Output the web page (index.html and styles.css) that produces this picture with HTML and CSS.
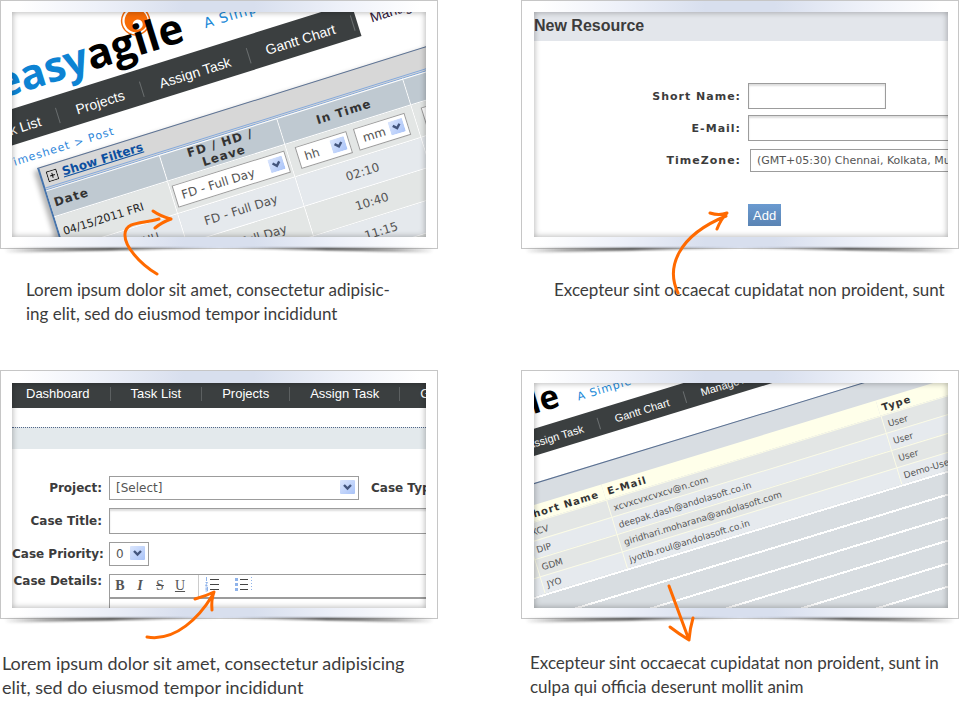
FILE: index.html
```
<!DOCTYPE html>
<html lang="en">
<head>
<meta charset="utf-8">
<title>easyagile tour</title>
<link rel="stylesheet" href="styles.css">
</head>
<body>
<svg class="defs" aria-hidden="true">
  <defs>
    <linearGradient id="curl" x1="0" x2="1" y1="0" y2="0">
      <stop offset="0" stop-color="#333" stop-opacity="0"/>
      <stop offset=".1" stop-color="#333" stop-opacity=".45"/>
      <stop offset=".25" stop-color="#222" stop-opacity=".95"/>
      <stop offset=".5" stop-color="#444" stop-opacity=".5"/>
      <stop offset=".75" stop-color="#222" stop-opacity=".95"/>
      <stop offset=".9" stop-color="#333" stop-opacity=".45"/>
      <stop offset="1" stop-color="#333" stop-opacity="0"/>
    </linearGradient>
    <linearGradient id="knob" x1="0" x2="1" y1="0" y2="1">
      <stop offset="0" stop-color="#dbe6fd"/>
      <stop offset="1" stop-color="#a9c3f8"/>
    </linearGradient>
    <symbol id="drop" viewBox="0 0 15 14">
      <rect width="15" height="14" rx="1" fill="url(#knob)"/>
      <path d="M4 5 L7.500 8.500 L11 5" fill="none" stroke="#43557d" stroke-width="2.400"/>
    </symbol>
    <symbol id="shade" viewBox="0 0 438 8" preserveAspectRatio="none">
      <path d="M2 0 H436 L432 5 Q330 2 219 0 Q108 2 6 5 Z" fill="url(#curl)"/>
    </symbol>
  </defs>
</svg>
<main class="tour">

  <figure class="card">
    <div class="frame">
      <div class="screen">
        <div class="scene scene-time">
          <div class="masthead">
            <span class="logo"><span class="logo-easy">easy</span>agile
              <svg class="logo-eye" viewBox="0 0 32 32" aria-hidden="true"><circle cx="16" cy="16" r="14" fill="none" stroke="#f26a0a" stroke-width="1.500"/><circle cx="16.500" cy="16" r="11.500" fill="#f76b06"/><circle cx="17" cy="20" r="5" fill="#fff"/></svg>
            </span>
            <span class="tagline">A Simple Project Tool</span>
          </div>
          <nav class="bar">
            <ul class="bar-list">
              <li><a href="#">Task List</a></li>
              <li><a href="#">Projects</a></li>
              <li><a href="#">Assign Task</a></li>
              <li><a href="#">Gantt Chart</a></li>
            </ul>
            <a class="bar-extra" href="#">Manage</a>
          </nav>
          <p class="crumbs">Timesheet &gt; Post</p>
          <div class="sheet">
            <div class="filters">
              <svg width="11" height="11" viewBox="0 0 11 11" aria-hidden="true"><path d="M.5 .5h10v10h-10z M3 5.500h5 M5.500 3v5" fill="none" stroke="#111"/></svg>
              <a href="#">Show Filters</a>
            </div>
            <table class="hours">
              <colgroup><col class="c-date"><col class="c-leave"><col class="c-in"><col></colgroup>
              <thead><tr><th class="left">Date</th><th>FD / HD /<br>Leave</th><th>In Time</th><th>Out Time</th></tr></thead>
              <tbody>
                <tr>
                  <td class="left dark">04/15/2011 FRI</td>
                  <td><span class="pick wide"><select aria-label="Leave type"><option>FD - Full Day</option></select><svg aria-hidden="true"><use href="#drop"/></svg></span></td>
                  <td><div class="picks"><span class="pick"><select aria-label="In hour"><option>hh</option></select><svg aria-hidden="true"><use href="#drop"/></svg></span><span class="pick"><select aria-label="In minute"><option>mm</option></select><svg aria-hidden="true"><use href="#drop"/></svg></span></div></td>
                  <td><div class="picks"><span class="pick"><select aria-label="Out hour"><option>hh</option></select><svg aria-hidden="true"><use href="#drop"/></svg></span></div></td>
                </tr>
                <tr><td class="left">04/14/2011 THU</td><td>FD - Full Day</td><td>02:10</td><td></td></tr>
                <tr><td class="left"></td><td>FD - Full Day</td><td>10:40</td><td></td></tr>
                <tr><td class="left"></td><td></td><td>11:15</td><td></td></tr>
                <tr><td class="left"></td><td></td><td></td><td></td></tr>
              </tbody>
            </table>
          </div>
        </div>
      </div>
      <svg class="shade" aria-hidden="true"><use href="#shade"/></svg>
    </div>
    <figcaption class="inset">Lorem ipsum dolor sit amet, consectetur adipisic-<br>ing elit, sed do eiusmod tempor incididunt</figcaption>
    <svg class="arrow" width="438" height="320" viewBox="0 0 438 320" aria-hidden="true"><path d="M157 274 C140 264 124 246 125 234 C126 221 142 224 159 219 M153 211 Q160 216 171 219 Q162 222 155 228"/></svg>
  </figure>

  <figure class="card">
    <div class="frame">
      <div class="screen">
        <h2 class="title">New Resource</h2>
        <form class="resource">
          <label for="short">Short Name:</label><input class="short" id="short" type="text">
          <label for="mail">E-Mail:</label><input class="long" id="mail" type="text">
          <label for="zone">TimeZone:</label><select class="zone" id="zone"><option>(GMT+05:30) Chennai, Kolkata, Mumbai, New Delhi</option></select>
          <button type="button">Add</button>
        </form>
      </div>
      <svg class="shade" aria-hidden="true"><use href="#shade"/></svg>
    </div>
    <figcaption class="deep">Excepteur sint occaecat cupidatat non proident, sunt</figcaption>
    <svg class="arrow" width="438" height="320" viewBox="0 0 438 320" aria-hidden="true"><path d="M157 293 C145 268 156 236 205 216 M189 213 Q198 216 206 213 Q200 219 196 229"/></svg>
  </figure>

  <figure class="card low">
    <div class="frame">
      <div class="screen">
        <nav class="topnav">
          <a href="#">Dashboard</a><a href="#">Task List</a><a href="#">Projects</a><a href="#">Assign Task</a><a href="#">Gantt Chart</a>
        </nav>
        <div class="band"></div>
        <form class="case">
          <label for="project">Project:</label>
          <div class="line"><span class="pick project"><select id="project"><option>[Select]</option></select><svg aria-hidden="true"><use href="#drop"/></svg></span><label for="type">Case Type:</label><select class="type" id="type"><option>Bug</option></select></div>
          <label for="ctitle">Case Title:</label><input id="ctitle" type="text">
          <label for="priority">Case Priority:</label>
          <div class="line"><span class="pick priority"><select id="priority"><option>0</option></select><svg aria-hidden="true"><use href="#drop"/></svg></span></div>
          <label class="top" for="details">Case Details:</label>
          <div class="editor">
            <div class="tools">
              <button type="button"><b>B</b></button><button type="button"><b><i>I</i></b></button><button type="button"><s>S</s></button><button type="button"><u>U</u></button>
              <button class="list first" type="button" aria-label="Numbered list"><svg width="17" height="16" viewBox="0 0 17 16" aria-hidden="true"><path d="M5 3.500h9 M5 8.500h9 M5 13.500h9" stroke="#444"/><path d="M1.500 1v4 M.5 6.500h2l-2 3h2 M.5 11h2v2h-2h2v2h-2" fill="none" stroke="#8fb3ea"/></svg></button>
              <button class="list" type="button" aria-label="Bulleted list"><svg width="17" height="16" viewBox="0 0 17 16" aria-hidden="true"><path d="M5 3.500h8 M5 8.500h8 M5 13.500h8" stroke="#444"/><path d="M0 2h3v3h-3z M0 7h3v3h-3z M0 12h3v3h-3z" fill="#8fb3ea"/><path d="M16.500 1v14" stroke="#8fb3ea" stroke-dasharray="1 2"/></svg></button>
            </div>
            <textarea id="details"></textarea>
          </div>
        </form>
      </div>
      <svg class="shade" aria-hidden="true"><use href="#shade"/></svg>
    </div>
    <figcaption class="large">Lorem ipsum dolor sit amet, consectetur adipisicing<br>elit, sed do eiusmod tempor incididunt</figcaption>
    <svg class="arrow" width="438" height="320" viewBox="0 0 438 320" aria-hidden="true"><path d="M147 267 C176 272 200 246 212 226 M195 229 Q206 226 214 222 Q211 230 212 240"/></svg>
  </figure>

  <figure class="card low">
    <div class="frame">
      <div class="screen">
        <div class="scene scene-users">
          <div class="masthead">
            <span class="logo"><span class="logo-easy">easy</span>agile</span>
            <span class="tagline">A Simple Project Tool</span>
          </div>
          <nav class="bar">
            <ul class="bar-list">
              <li><a href="#">Projects</a></li>
              <li><a href="#">Assign Task</a></li>
              <li><a href="#">Gantt Chart</a></li>
              <li><a href="#">Manage Account</a></li>
            </ul>
          </nav>
          <div class="sheet">
            <table class="users">
              <colgroup><col class="c-lead"><col class="c-short"><col class="c-mail"><col></colgroup>
              <thead><tr><th></th><th>Short Name</th><th>E-Mail</th><th>Type</th></tr></thead>
              <tbody>
                <tr><td></td><td>XCV</td><td>xcvxcvxcvxcv@n.com</td><td>User</td></tr>
                <tr><td></td><td>DIP</td><td>deepak.dash@andolasoft.co.in</td><td>User</td></tr>
                <tr><td></td><td>GDM</td><td>giridhari.moharana@andolasoft.com</td><td>User</td></tr>
                <tr><td></td><td>JYO</td><td>jyotib.roul@andolasoft.co.in</td><td>Demo-User</td></tr>
              </tbody>
            </table>
            <div class="blank-rows"></div>
          </div>
        </div>
      </div>
      <svg class="shade" aria-hidden="true"><use href="#shade"/></svg>
    </div>
    <figcaption class="slight">Excepteur sint occaecat cupidatat non proident, sunt in<br>culpa qui officia deserunt mollit anim</figcaption>
    <svg class="arrow" width="438" height="320" viewBox="0 0 438 320" aria-hidden="true"><path d="M148 216 Q157 240 168 270 M149 257 Q158 264 168 270 Q169 258 172 248"/></svg>
  </figure>

</main>
</body>
</html>
```
FILE: styles.css
```
* { box-sizing: border-box; }

body {
  margin: 0;
  background: #fff;
  color: #3c3c3c;
  font-family: "DejaVu Sans", sans-serif;
  overflow-x: hidden;
}

.defs { position: absolute; width: 0; height: 0; }

.tour {
  display: grid;
  grid-template-columns: 1fr 1fr;
  gap: 44px 83px;
}

.card { position: relative; min-width: 0; margin: 0; }

.frame {
  position: relative;
  padding: 11px;
  border: 1px solid #c6c6c6;
  background: linear-gradient(90deg, #fff 4%, #eef1f9 22%, #d8dfee 42%, #d8dfee 58%, #eef1f9 78%, #fff 96%);
}
.card:nth-child(even) .frame { padding-right: 10px; padding-left: 12px; }
.low .frame { padding-top: 12px; padding-bottom: 10px; }

.screen {
  position: relative;
  height: 225px;
  overflow: hidden;
  background: #fff;
}

.screen::after {
  content: "";
  position: absolute;
  inset: 0;
  box-shadow: inset 0 0 6px rgba(0, 0, 0, .35);
  pointer-events: none;
}

.shade {
  position: absolute;
  top: 100%;
  left: 0;
  width: 100%;
  height: 8px;
  filter: blur(1px);
}

.arrow {
  position: absolute;
  top: 0;
  left: 0;
  fill: none;
  stroke: #ff6a00;
  stroke-width: 3;
  stroke-linecap: round;
  stroke-linejoin: round;
  pointer-events: none;
}

figcaption {
  margin-top: 29px;
  padding-left: 2px;
  font: 17px/24px Lato, sans-serif;
  white-space: nowrap;
}
.low figcaption { margin-top: 32px; }
figcaption.large { font-size: 18px; }
figcaption.inset { padding-left: 26px; }
figcaption.deep { padding-left: 33px; }
figcaption.slight { padding-left: 9px; }

a { color: inherit; text-decoration: none; }

input, select, textarea {
  border: 1px solid #9c9c9c;
  border-radius: 0;
  background: #fff;
  color: #555;
  font: 11px "DejaVu Sans", sans-serif;
  appearance: none;
}
input { height: 26px; box-shadow: inset 0 2px 2px #ddd; }

.pick { position: relative; display: inline-block; width: 54px; height: 23px; }
.pick select { display: block; width: 100%; height: 100%; padding: 0 6px; }
.pick svg { position: absolute; top: 4px; right: 4px; width: 15px; height: 14px; pointer-events: none; }

/* Tilted application views */
.scene { width: 640px; transform-origin: 0 0; }
.masthead { position: relative; display: flex; align-items: baseline; white-space: nowrap; }
.logo { position: relative; color: #000; font-family: "Open Sans", sans-serif; font-weight: 700; }
.logo-easy { color: #0d83d3; }
.logo-eye { position: absolute; width: 32px; height: 32px; top: 3px; right: 27px; z-index: -1; }
.tagline { color: #2089d8; letter-spacing: 1px; }
.bar { display: flex; align-items: center; font-family: "Liberation Sans", sans-serif; white-space: nowrap; }
.bar-list { display: flex; align-items: center; height: 100%; margin: 0; padding: 0; background: #3b3f40; color: #fff; list-style: none; }
.bar-list li { border-right: 1px solid #6b6f70; }
.bar-extra { padding-top: 4px; color: #301838; }

.scene-time { transform: translate(-71px, 50px) rotate(-17.4deg); }
.scene-time .masthead { height: 66px; padding-left: 46px; gap: 22px; }
.scene-time .logo { font-size: 42px; line-height: 74px; }
.scene-time .tagline { align-self: flex-start; font-size: 14px; line-height: 84px; }
.scene-time .bar { height: 35px; font-size: 14px; gap: 14px; }
.scene-time .bar-list { padding: 4px 4px 0 5px; }
.scene-time .bar-list a { padding: 0 18px; }
.crumbs { height: 29px; margin: 0; padding-left: 32px; color: #2a85da; font-size: 11px; line-height: 34px; letter-spacing: 1px; }
.scene-time .sheet {
  margin-left: 60px;
  border-top: 1px solid #5a7092;
  border-left: 2px solid #4674ac;
  background: #d7d7d7;
  box-shadow: -4px 2px 5px rgba(0, 0, 0, .3);
}
.filters { display: flex; align-items: center; gap: 5px; height: 20px; padding-left: 5px; color: #0c4fa0; font-size: 12px; font-weight: 700; }
.filters a { text-decoration: underline; }

table { table-layout: fixed; width: 100%; border-spacing: 0; font-size: 11px; color: #555; }
th, td { padding: 0; white-space: nowrap; }
.hours { border-top: 3px double #84a9dc; text-align: center; font-size: 12px; }
.hours th { height: 28px; border: solid #fff; border-width: 1px 1px 1px 0; background: #bfc9d1; color: #333; font-size: 12px; line-height: 13px; letter-spacing: 1px; }
.hours td { height: 31px; border: solid #fff; border-width: 0 1px 1px 0; background: #e3e6e5; }
.hours tr:first-child td { height: 34px; }
.hours tr:nth-child(even) td { background: #e5e9ed; }
.hours .left { padding-left: 4px; text-align: left; }
.hours td.left { font-size: 11px; }
.hours .dark { color: #222; }
.hours .pick { vertical-align: middle; }
.hours .wide { width: 118px; }
.hours .pick select { font-size: 12px; }
.picks { display: flex; gap: 7px; padding-left: 8px; }
.c-date { width: 119px; }
.c-leave { width: 123px; }
.c-in { width: 132px; }

.scene-users { transform: translate(-147px, 30px) rotate(-17deg); }
.scene-users .masthead { height: 58px; padding-left: 16px; gap: 18px; }
.scene-users .logo { font-size: 33px; line-height: 63px; }
.scene-users .tagline { font-size: 11px; }
.scene-users .bar { height: 26px; padding-left: 36px; font-size: 11px; }
.scene-users .bar-list { padding-top: 2px; }
.scene-users .bar-list a { padding: 0 16px; }
.scene-users .sheet { margin-top: 26px; border-top: 1px solid #5a7092; background: #d8dde2; padding-top: 20px; }
.users th { height: 16px; background: #ffffea; color: #333; font-size: 10px; line-height: 14px; letter-spacing: 1px; text-align: left; }
.users td { height: 18px; border: solid #fbfbe6; border-width: 1px 0 0 1px; background: #e3e6e5; font-size: 9px; line-height: 16px; }
.users th, .users td { padding-left: 4px; }
.users th { padding-top: 2px; }
.users tr:nth-child(even) td { background: #e6eaee; }
.c-lead { width: 98px; }
.c-short { width: 86px; }
.c-mail { width: 287px; }
.blank-rows { height: 160px; background: repeating-linear-gradient(#fff 0 2px, #d8dde1 2px 22px); }

/* New resource form */
.title { margin: 0; padding-top: 1px; height: 29px; background: #e3e6eb; font: 700 16px/26px "Liberation Sans", sans-serif; }
.resource {
  display: grid;
  grid-template-columns: 50% 1fr;
  grid-template-rows: 26px 26px 26px 22px;
  gap: 6px 7px;
  align-items: center;
  padding-top: 42px;
}
.resource label { font-size: 11px; font-weight: 700; letter-spacing: 1px; text-align: right; }
.short { width: 138px; }
.long { width: 240px; }
.zone { width: 320px; height: 23px; margin-left: 2px; padding: 0 6px; }
.resource button {
  grid-column: 2;
  justify-self: start;
  height: 22px;
  margin-top: 50px;
  padding: 0 5px;
  border: 0;
  background: linear-gradient(#6a9ad0, #5a84b4);
  color: #fff;
  font: 13px "Liberation Sans", sans-serif;
}

/* Case form */
.topnav { display: flex; align-items: center; height: 25px; margin-left: -6px; padding-bottom: 3px; background: #3b3f40; color: #fff; font: 13px/14px "Liberation Sans", sans-serif; white-space: nowrap; }
.topnav a { padding: 0 20px; border-right: 1px solid #5c6061; }
.band { height: 22px; margin-top: 19px; border-top: 1px dotted #51678a; background: #e3e9ec; }
.case {
  display: grid;
  grid-template-columns: 90px 1fr;
  grid-template-rows: 24px 26px 24px auto;
  gap: 8px 7px;
  align-items: center;
  margin-right: -10px;
  padding-top: 27px;
}
.case label { font-size: 12px; font-weight: 700; text-align: right; white-space: nowrap; }
.case label.top { align-self: start; }
.case .pick { height: 24px; }
.case .pick select { font-size: 12px; }
.case .project { width: 250px; flex: none; }
.case .priority { width: 40px; }
.line { display: flex; align-items: center; gap: 12px; height: 24px; min-width: 0; }
.type { width: 90px; height: 24px; }
.editor { min-width: 0; border: 1px solid #9c9c9c; border-width: 1px 0 0 1px; }
.tools { display: flex; align-items: center; height: 24px; border-bottom: 2px solid #9c9c9c; }
.tools button { width: 20px; height: 20px; padding: 0; border: 0; background: none; color: #555; font: 14px "Liberation Serif", serif; }
.tools .list { width: 30px; height: 22px; }
.tools .list.first { margin-left: 8px; border-left: 1px solid #ccc; }
.editor textarea { display: block; width: 100%; height: 40px; border: 0; resize: none; }
```
